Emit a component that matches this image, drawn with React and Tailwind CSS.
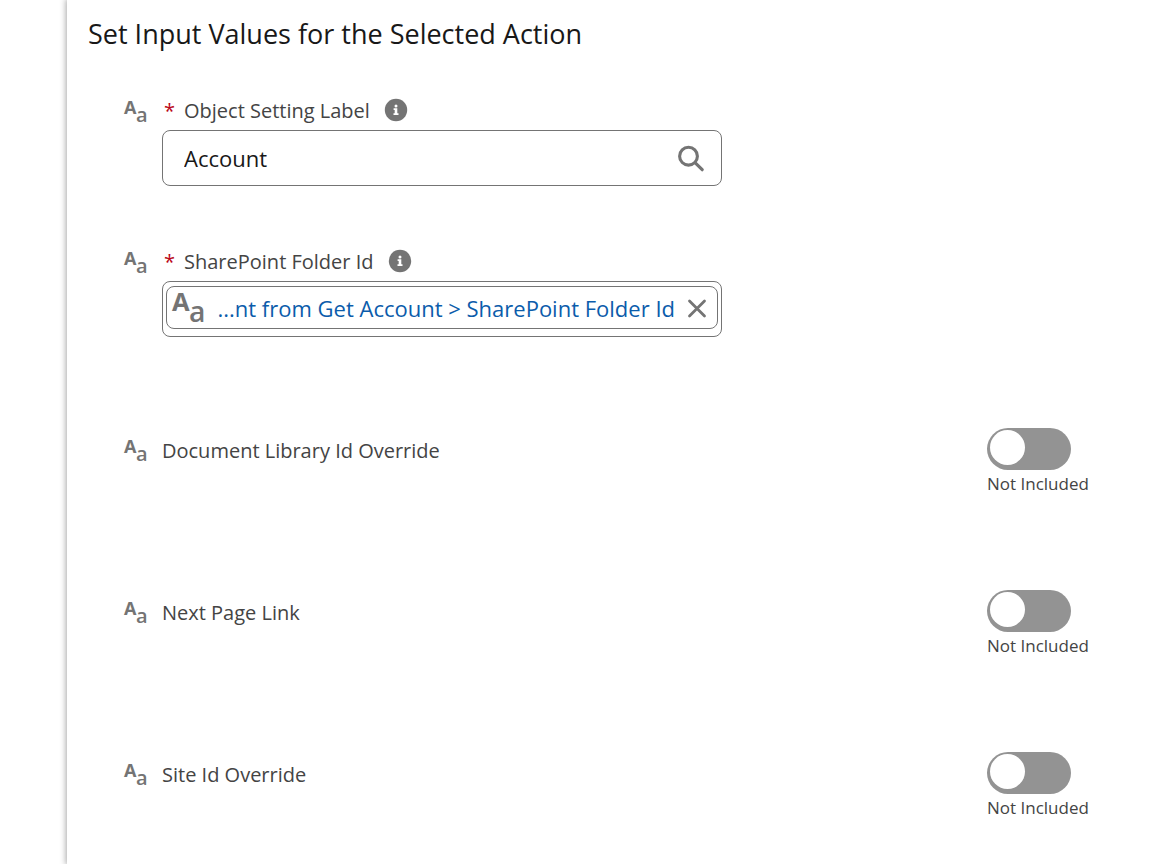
import React, { useState } from 'react';

const TextTypeIcon = ({ className }) => (
  <svg viewBox="0 0 24 24" className={className} fill="#747474" fontFamily="'Open Sans', sans-serif" overflow="visible" aria-hidden="true">
    <text x="0" y="14" fontSize="18" fontWeight="700">A</text>
    <text x="12" y="22" fontSize="20" fontWeight="600">a</text>
  </svg>
);

const InfoIcon = () => (
  <svg viewBox="0 0 24 24" className="size-6" aria-hidden="true">
    <circle cx="12" cy="12" r="11.2" fill="#747474" />
    <circle cx="12" cy="7.9" r="1.5" fill="#fff" />
    <path d="M9.6 10.2h3.7v5h1.2v1.7H9.5v-1.7h1.2v-3.3H9.6z" fill="#fff" />
  </svg>
);

const SearchIcon = () => (
  <svg viewBox="0 0 28 28" className="size-7" fill="none" stroke="#747474" aria-hidden="true">
    <circle cx="11.5" cy="12.2" r="8.9" strokeWidth="3.1" />
    <path d="M18 18.7l7.2 7" strokeWidth="3.2" strokeLinecap="round" />
  </svg>
);

const CloseIcon = () => (
  <svg viewBox="0 0 20 20" className="size-5" fill="none" stroke="#747474" strokeWidth="2.8" strokeLinecap="round" aria-hidden="true">
    <path d="M2.5 3l15 15M17.5 3l-15 15" />
  </svg>
);

const RequiredField = ({ id, label, children }) => (
  <div className="flex items-start gap-[14px]">
    <TextTypeIcon className="mt-[10px] size-6 shrink-0 overflow-visible" />
    <div className="w-[560px]">
      <div className="flex h-10 items-center">
        <label htmlFor={id} className="flex items-center pt-[2px] text-[20px] text-[#444]">
          <span className="w-[22px] pl-[2px] text-[#ba0517]">*</span>
          {label}
        </label>
        <button type="button" aria-label={`Help: ${label}`} className="ml-[14px]">
          <InfoIcon />
        </button>
      </div>
      {children}
    </div>
  </div>
);

const OptionalField = ({ id, label }) => {
  const [included, setIncluded] = useState(false);

  return (
    <div className="flex items-start justify-between">
      <label htmlFor={id} className="flex h-[46px] items-center gap-[14px] text-[20px] text-[#444]">
        <TextTypeIcon className="size-6 shrink-0 overflow-visible" />
        {label}
      </label>
      <div className="flex w-[100px] flex-col">
        <input
          id={id}
          type="checkbox"
          role="switch"
          checked={included}
          onChange={(event) => setIncluded(event.target.checked)}
          className="h-[42px] w-[84px] appearance-none rounded-full bg-[#939393] px-[3px] py-[2px] before:block before:size-[35px] before:rounded-full before:bg-white checked:bg-[#0176d3] checked:before:ml-auto"
        />
        <span className="text-[17px] leading-[28px] whitespace-nowrap text-[#444]">{included ? 'Included' : 'Not Included'}</span>
      </div>
    </div>
  );
};

const optionalFields = [
  { id: 'library', label: 'Document Library Id Override' },
  { id: 'nextPage', label: 'Next Page Link' },
  { id: 'site', label: 'Site Id Override' },
];

const App = () => {
  const [objectSetting, setObjectSetting] = useState('Account');
  const [folderSet, setFolderSet] = useState(true);

  return (
    <div className="min-h-screen overflow-hidden bg-white pl-[67px] font-['Open_Sans',sans-serif]">
      <main className="min-h-screen bg-white pt-4 pr-[78px] pl-[21px] shadow-[0_0_6px_1px_rgba(0,0,0,0.35)]">
        <h1 className="text-[27px] leading-[36px] text-[#181818]">Set Input Values for the Selected Action</h1>
        <form className="mt-[38px] pl-9" onSubmit={(event) => event.preventDefault()}>
          <RequiredField id="objectSetting" label="Object Setting Label">
            <div className="flex h-14 items-center rounded-lg border border-[#747474] pr-4 pl-[21px]">
              <input
                id="objectSetting"
                value={objectSetting}
                onChange={(event) => setObjectSetting(event.target.value)}
                className="min-w-0 flex-1 text-[22px] text-[#181818] outline-none"
              />
              <button type="button" aria-label="Search">
                <SearchIcon />
              </button>
            </div>
          </RequiredField>
          <div className="mt-[55px]">
            <RequiredField id="folderId" label="SharePoint Folder Id">
              <div className="h-14 rounded-lg border border-[#747474] px-[3px] py-1">
                {folderSet && (
                  <div className="flex h-[43px] items-center rounded-lg border border-[#747474] pr-[10px] pl-[5px]">
                    <TextTypeIcon className="size-[34px] shrink-0 overflow-visible" />
                    <button id="folderId" type="button" className="flex-1 pt-px text-right text-[22px] whitespace-nowrap text-[#0b5cab]">
                      ...nt from Get Account &gt; SharePoint Folder Id
                    </button>
                    <button type="button" aria-label="Clear" className="ml-3" onClick={() => setFolderSet(false)}>
                      <CloseIcon />
                    </button>
                  </div>
                )}
              </div>
            </RequiredField>
          </div>
          <div className="mt-[91px] flex flex-col gap-[92px]">
            {optionalFields.map((field) => (
              <OptionalField key={field.id} id={field.id} label={field.label} />
            ))}
          </div>
        </form>
      </main>
    </div>
  );
};

export default App;
